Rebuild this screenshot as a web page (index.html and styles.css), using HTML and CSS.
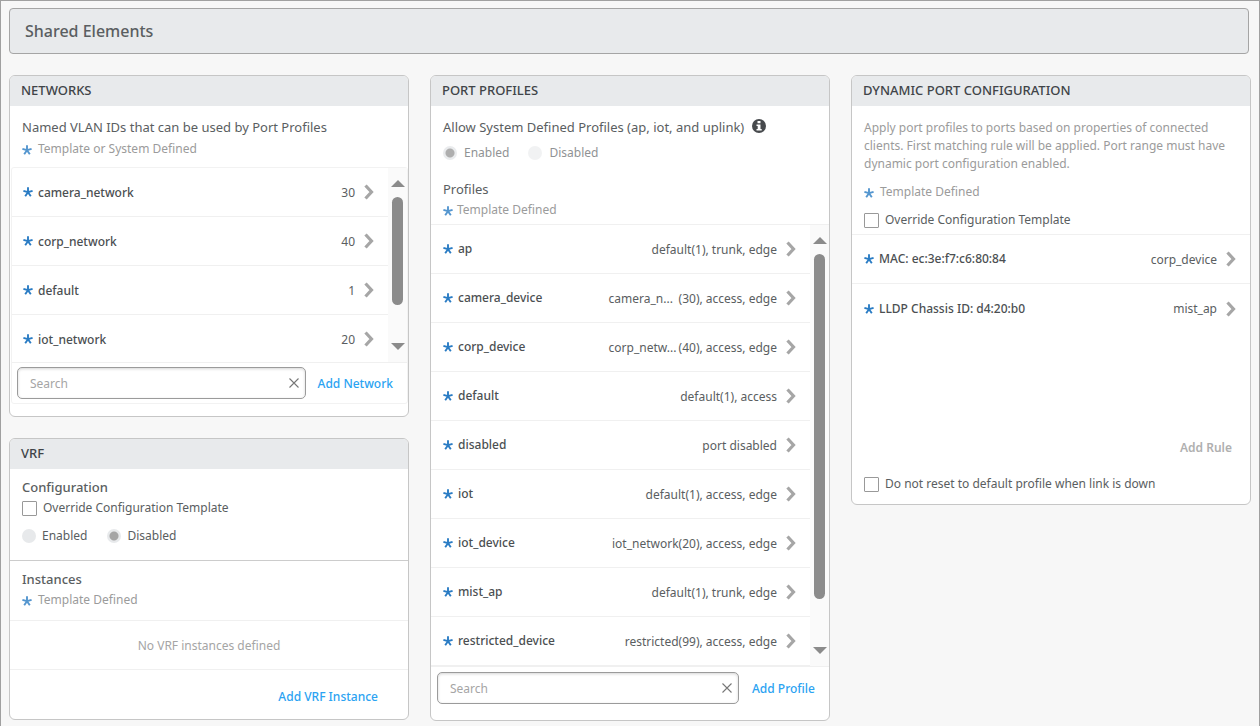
FILE: index.html
```html
<!DOCTYPE html>
<html lang="en">
<head>
<meta charset="utf-8">
<title>Shared Elements</title>
<link rel="stylesheet" href="styles.css">
</head>
<body>
<svg class="defs" aria-hidden="true">
  <symbol id="chevron" viewBox="0 0 10 16"><path d="M1.5 1.5 7.5 8l-6 6.500" fill="none" stroke="#a6a6a6" stroke-width="3.200"/></symbol>
  <symbol id="star" viewBox="0 0 10 10"><path d="M5 5.200V.3M5 5.200l4.600-1.400M5 5.200l2.800 4M5 5.200l-2.800 4M5 5.200.4 3.800" fill="none" stroke="currentColor" stroke-width="1.900"/></symbol>
  <symbol id="clear" viewBox="0 0 10 10"><path d="M.5.5l9 9M9.500.5l-9 9" fill="none" stroke="#777" stroke-width="1.100"/></symbol>
  <symbol id="up" viewBox="0 0 14 7"><path d="M7 0l7 7H0z" fill="#8b8b8b"/></symbol>
  <symbol id="down" viewBox="0 0 14 7"><path d="M0 0h14L7 7z" fill="#8b8b8b"/></symbol>
</svg>
<main class="page">
  <h1 class="banner">Shared Elements</h1>
  <div class="columns">
    <div class="column">
      <section class="card">
        <h2 class="card-title">NETWORKS</h2>
        <div class="intro intro-networks">
          <p class="lead">Named VLAN IDs that can be used by Port Profiles</p>
          <p class="legend"><svg class="star"><use href="#star"/></svg>Template or System Defined</p>
        </div>
        <div class="inset">
          <div class="scroller networks-list">
            <ul class="list">
              <li class="row"><svg class="star"><use href="#star"/></svg><span class="name">camera_network</span><span class="value">30</span><svg class="chevron"><use href="#chevron"/></svg></li>
              <li class="row"><svg class="star"><use href="#star"/></svg><span class="name">corp_network</span><span class="value">40</span><svg class="chevron"><use href="#chevron"/></svg></li>
              <li class="row"><svg class="star"><use href="#star"/></svg><span class="name">default</span><span class="value">1</span><svg class="chevron"><use href="#chevron"/></svg></li>
              <li class="row"><svg class="star"><use href="#star"/></svg><span class="name">iot_network</span><span class="value">20</span><svg class="chevron"><use href="#chevron"/></svg></li>
            </ul>
            <div class="scrollbar" aria-hidden="true"><svg class="arrow"><use href="#up"/></svg><div class="track"><div class="thumb thumb-networks"></div></div><svg class="arrow"><use href="#down"/></svg></div>
          </div>
          <div class="footer">
            <div class="search"><input class="search-input" type="text" placeholder="Search" aria-label="Search networks"><button class="clear" aria-label="Clear search"><svg class="clear-icon"><use href="#clear"/></svg></button></div>
            <button class="link">Add Network</button>
          </div>
        </div>
      </section>
      <section class="card vrf">
        <h2 class="card-title">VRF</h2>
        <div class="vrf-config">
          <h3 class="subhead">Configuration</h3>
          <label class="check"><input class="box" type="checkbox">Override Configuration Template</label>
          <div class="radios">
            <label class="radio"><input class="dot" type="radio" name="vrf">Enabled</label>
            <label class="radio"><input class="dot" type="radio" name="vrf" checked>Disabled</label>
          </div>
        </div>
        <div class="vrf-instances">
          <h3 class="subhead">Instances</h3>
          <p class="legend"><svg class="star"><use href="#star"/></svg>Template Defined</p>
        </div>
        <p class="empty">No VRF instances defined</p>
        <div class="vrf-footer"><button class="link">Add VRF Instance</button></div>
      </section>
    </div>
    <section class="card">
      <h2 class="card-title">PORT PROFILES</h2>
      <div class="intro intro-ports">
        <p class="lead">Allow System Defined Profiles (ap, iot, and uplink)<svg class="info" viewBox="0 0 14 14"><circle cx="7" cy="7" r="7" fill="#474a4d"/><path d="M5.500 2h3v2.200h-3zM4.500 5.400h4v4.500h1.200v1.700H4.500V9.900h1.200V7.100H4.500z" fill="#fff"/></svg></p>
        <div class="radios muted">
          <label class="radio"><input class="dot" type="radio" name="sys" checked disabled>Enabled</label>
          <label class="radio"><input class="dot" type="radio" name="sys" disabled>Disabled</label>
        </div>
        <p class="lead profiles">Profiles</p>
        <p class="legend tight"><svg class="star"><use href="#star"/></svg>Template Defined</p>
      </div>
      <div class="scroller">
        <ul class="list">
          <li class="row"><svg class="star"><use href="#star"/></svg><span class="name">ap</span><span class="value">default(1), trunk, edge</span><svg class="chevron"><use href="#chevron"/></svg></li>
          <li class="row"><svg class="star"><use href="#star"/></svg><span class="name">camera_device</span><span class="value"><span class="net">camera_n...</span>(30), access, edge</span><svg class="chevron"><use href="#chevron"/></svg></li>
          <li class="row"><svg class="star"><use href="#star"/></svg><span class="name">corp_device</span><span class="value"><span class="net">corp_netw...</span>(40), access, edge</span><svg class="chevron"><use href="#chevron"/></svg></li>
          <li class="row"><svg class="star"><use href="#star"/></svg><span class="name">default</span><span class="value">default(1), access</span><svg class="chevron"><use href="#chevron"/></svg></li>
          <li class="row"><svg class="star"><use href="#star"/></svg><span class="name">disabled</span><span class="value">port disabled</span><svg class="chevron"><use href="#chevron"/></svg></li>
          <li class="row"><svg class="star"><use href="#star"/></svg><span class="name">iot</span><span class="value">default(1), access, edge</span><svg class="chevron"><use href="#chevron"/></svg></li>
          <li class="row"><svg class="star"><use href="#star"/></svg><span class="name">iot_device</span><span class="value">iot_network(20), access, edge</span><svg class="chevron"><use href="#chevron"/></svg></li>
          <li class="row"><svg class="star"><use href="#star"/></svg><span class="name">mist_ap</span><span class="value">default(1), trunk, edge</span><svg class="chevron"><use href="#chevron"/></svg></li>
          <li class="row"><svg class="star"><use href="#star"/></svg><span class="name">restricted_device</span><span class="value">restricted(99), access, edge</span><svg class="chevron"><use href="#chevron"/></svg></li>
        </ul>
        <div class="scrollbar" aria-hidden="true"><svg class="arrow"><use href="#up"/></svg><div class="track"><div class="thumb thumb-ports"></div></div><svg class="arrow"><use href="#down"/></svg></div>
      </div>
      <div class="footer footer-ports">
        <div class="search"><input class="search-input" type="text" placeholder="Search" aria-label="Search profiles"><button class="clear" aria-label="Clear search"><svg class="clear-icon"><use href="#clear"/></svg></button></div>
        <button class="link">Add Profile</button>
      </div>
    </section>
    <section class="card">
      <h2 class="card-title">DYNAMIC PORT CONFIGURATION</h2>
      <div class="intro intro-dynamic">
        <p class="help">Apply port profiles to ports based on properties of connected clients. First matching rule will be applied. Port range must have dynamic port configuration enabled.</p>
        <p class="legend"><svg class="star"><use href="#star"/></svg>Template Defined</p>
        <label class="check"><input class="box" type="checkbox">Override Configuration Template</label>
      </div>
      <ul class="list rules">
        <li class="row"><svg class="star"><use href="#star"/></svg><span class="name">MAC: ec:3e:f7:c6:80:84</span><span class="value">corp_device</span><svg class="chevron"><use href="#chevron"/></svg></li>
        <li class="row"><svg class="star"><use href="#star"/></svg><span class="name">LLDP Chassis ID: d4:20:b0</span><span class="value">mist_ap</span><svg class="chevron"><use href="#chevron"/></svg></li>
      </ul>
      <div class="rule-footer"><button class="link" disabled>Add Rule</button></div>
      <label class="check reset"><input class="box" type="checkbox">Do not reset to default profile when link is down</label>
    </section>
  </div>
</main>
</body>
</html>
```
FILE: styles.css
```css
* { box-sizing: border-box; }
body { margin: 0; background: #f7f7f7; color: #5a5e61; font: 12px/18px "Noto Sans", sans-serif; }
h1, h2, h3, p, ul { margin: 0; padding: 0; }
ul { list-style: none; }
svg { display: block; flex: none; }
.defs { position: absolute; width: 0; height: 0; }
.page { min-height: 100vh; padding: 7px 8px 5px; border: 1px solid #a0a0a0; }
.banner { height: 46px; margin-right: 2px; padding: 0 15px; border: 1px solid #a5a5a5; border-radius: 4px; background: #e8eaec; font-size: 16px; font-weight: 500; line-height: 44px; }
.columns { display: grid; grid-template-columns: repeat(3, 1fr); gap: 21px; align-items: start; margin-top: 21px; }
.column { display: grid; gap: 21px; }
.card { border: 1px solid #c6c6c6; border-radius: 6px; background: #fff; overflow: hidden; min-width: 0; }
.card-title { padding: 0 11px; height: 30px; background: #e8eaec; color: #404448; font-size: 13px; font-weight: 500; line-height: 29px; }
.intro { padding: 12px 12px 0; }
.lead { display: flex; align-items: center; gap: 8px; font-size: 13px; }
.legend { display: flex; align-items: center; gap: 6px; color: #9b9b9b; }
.legend.tight { gap: 4px; }
.star { width: 10px; height: 10px; color: #2a7cc4; }
.legend .star { margin-top: 1px; opacity: .8; }
.info { width: 14px; height: 14px; margin-top: -2px; }
.intro-networks .legend { margin: 4px 0 9px; }
.inset { margin: 0 0 12px 1px; border: 1px solid #f2f2f2; border-radius: 3px; }
.scroller { display: flex; }
.networks-list { height: 194px; overflow: hidden; }
.list { flex: 1; min-width: 0; }
.row { display: flex; align-items: center; height: 49px; padding: 0 14px 0 12px; border-bottom: 1px solid #f0f0f0; }
.name { margin-left: 5px; font-weight: 500; color: #4b4f52; }
.value { display: flex; margin-left: auto; padding-top: 1px; }
.net { width: 70px; }
.chevron { width: 10px; height: 16px; margin-left: 9px; }
.scrollbar { display: flex; flex-direction: column; align-items: center; width: 19px; padding: 12px 0; background: #fafafa; }
.arrow { width: 14px; height: 7px; }
.track { flex: 1; padding: 10px 0; }
.thumb { width: 11px; border-radius: 6px; background: #8b8b8b; }
.thumb-networks { height: 108px; }
.thumb-ports { height: 345px; }
.footer { display: flex; align-items: center; gap: 12px; padding: 4px 14px 4px 5px; border-top: 1px solid #f0f0f0; }
.footer .link { padding-top: 1px; }
.search { display: flex; align-items: center; flex: 1; height: 32px; padding: 0 6px 0 12px; border: 1px solid #9b9b9b; border-radius: 5px; background: #fff; box-shadow: inset 0 1px 3px #d5d5d5; }
.search-input { flex: 1; min-width: 0; padding: 1px 0 0; border: 0; outline: 0; background: none; color: #55595c; font: inherit; }
.search-input::placeholder { color: #a5a5a5; opacity: 1; }
.clear { padding: 0; border: 0; background: none; }
.clear-icon { width: 10px; height: 10px; }
.link { padding: 0; border: 0; background: none; color: #2ba3f2; font: 500 12px/18px "Noto Sans", sans-serif; white-space: nowrap; }
.link:disabled { color: #b0b0b0; font-weight: 600; }
.subhead { font-size: 13px; font-weight: 500; }
.check { display: flex; align-items: center; gap: 6px; }
.box { appearance: none; width: 15px; height: 15px; margin: 0; border: 1px solid #999; border-radius: 1px; background: #fff; }
.radios { display: flex; gap: 20px; }
.radio { display: flex; align-items: center; gap: 6px; }
.dot { appearance: none; width: 14px; height: 14px; margin: 0; border-radius: 50%; background: #e7e9eb; }
.dot:checked { background: radial-gradient(circle, #a5a5a5 4px, #e7e9eb 5px); }
.muted { gap: 19px; color: #909294; }
.muted .radio { gap: 7px; }
.muted .dot { opacity: .6; }
.muted .dot:checked { opacity: .9; }
.vrf-config { padding: 9px 12px 15px; border-bottom: 1px solid #ccc; }
.vrf-config .check { margin-top: 3px; }
.vrf-config .radios { margin-top: 10px; }
.vrf-instances { padding: 9px 12px 11px; border-bottom: 1px solid #f0f0f0; }
.vrf-instances .legend { margin-top: 3px; }
.empty { height: 49px; border-bottom: 1px solid #f0f0f0; color: #a5a5a5; line-height: 50px; text-align: center; }
.vrf-footer { display: flex; justify-content: flex-end; padding: 18px 30px 13px; }
.intro-ports { padding-bottom: 5px; border-bottom: 1px solid #f0f0f0; }
.intro-ports .radios { margin-top: 8px; }
.profiles { margin-top: 18px; }
.intro-ports .legend { margin-top: 3px; }
.inset .row { padding-left: 11px; }
.inset .name { padding-top: 1px; }
.footer-ports { gap: 13px; padding: 5px 14px 16px 6px; }
.intro-dynamic { padding: 13px 12px 5px; border-bottom: 1px solid #f0f0f0; }
.help { color: #9b9b9b; }
.intro-dynamic .legend { margin-top: 10px; }
.intro-dynamic .check { margin-top: 10px; }
.rules { min-height: 204px; }
.rules .row:last-child { border: 0; }
.rule-footer { display: flex; justify-content: flex-end; padding: 0 18px; }
.reset { padding: 18px 12px 11px; }
```
